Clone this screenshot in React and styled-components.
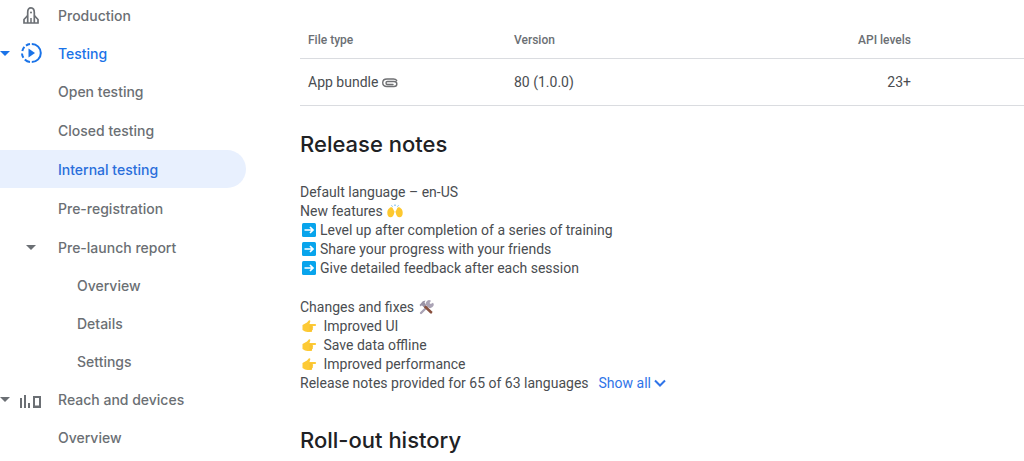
import React from 'react';
import styled, { createGlobalStyle } from 'styled-components';

const GlobalStyle = createGlobalStyle`
  * {
    box-sizing: border-box;
  }
  body {
    margin: 0;
    background: #fff;
    color: #4a4d51;
    font-family: Roboto, 'Liberation Sans', sans-serif;
    font-size: 14px;
    overflow-x: hidden;
  }
`;

const Page = styled.div`
  display: flex;
  gap: 54px;
`;

const Sidebar = styled.nav`
  flex: 0 0 246px;
  margin-top: -4px;
`;

const NavList = styled.ul`
  display: flex;
  flex-direction: column;
  gap: ${props => props.$gap || 0}px;
  margin: 0;
  padding: 0;
  list-style: none;
`;

const NavLink = styled.a`
  display: flex;
  align-items: center;
  height: 38px;
  padding-left: ${props => (props.$indent ? 77 : 0)}px;
  border-radius: 0 19px 19px 0;
  background: ${props => (props.$selected ? '#e8f0fe' : 'transparent')};
  color: ${props => (props.$selected ? '#2a6edb' : props.$active ? '#1a73e8' : '#6b6f74')};
  font-family: Inter, 'Open Sans', sans-serif;
  font-size: 14px;
  font-weight: 500;
  text-decoration: none;
`;

const Gutter = styled.span`
  display: flex;
  align-items: center;
  flex: 0 0 58px;
  padding-left: ${props => (props.$nested ? 26 : 0)}px;
`;

const CaretSlot = styled.span`
  display: flex;
  flex: 0 0 20px;
`;

const Main = styled.main`
  flex: 1;
  min-width: 0;
  padding: 22px 0 0;
`;

const BundleTable = styled.table`
  width: 100%;
  table-layout: fixed;
  border-collapse: collapse;
  text-align: left;
`;

const HeadCell = styled.th`
  width: ${props => (props.$width ? `${props.$width}px` : 'auto')};
  height: 36px;
  padding: 0 8px;
  border-bottom: 1px solid #dadce0;
  color: #6b6f74;
  font-size: 12px;
  font-weight: 500;
  text-align: ${props => (props.$right ? 'right' : 'left')};
`;

const Cell = styled.td`
  height: 47px;
  padding: 0 8px;
  border-bottom: 1px solid #dadce0;
  text-align: ${props => (props.$right ? 'right' : 'left')};
`;

const Title = styled.h2`
  margin: 0;
  color: #202124;
  font-family: Inter, 'Open Sans', sans-serif;
  font-size: 22px;
  font-weight: 500;
  line-height: 28px;
`;

const Section = styled.section`
  padding-top: 24px;
`;

const Notes = styled.div`
  display: flex;
  flex-direction: column;
  gap: 20px;
  padding: 25px 0 9px;
  line-height: 19px;
`;

const Paragraph = styled.p`
  margin: 0;
`;

const Line = styled.span`
  display: flex;
  align-items: center;
`;

const Emoji = styled.svg`
  flex: none;
  width: 16px;
  height: 16px;
  margin: 0 2px;
`;

const InlineEmoji = styled(Emoji)`
  margin-left: 4px;
`;

const ShowAll = styled.button`
  display: inline-flex;
  align-items: center;
  gap: 3px;
  margin-left: 10px;
  padding: 0;
  border: 0;
  background: none;
  color: #2f74e8;
  font: inherit;
  cursor: pointer;
`;

const Caret = () => (
  <svg width="10" height="5" viewBox="0 0 10 5" aria-hidden="true">
    <path d="M0 0h10L5 5z" fill="currentColor" />
  </svg>
);

const RocketIcon = () => (
  <svg width="22" height="22" viewBox="0 0 22 22" fill="none" stroke="currentColor" strokeWidth="1.7" aria-hidden="true">
    <path d="M7.700 19V8.500c0-2.800.8-4.700 3.300-4.700s3.300 1.900 3.300 4.700V19" />
    <path d="M7.700 11.500L4 15.500V19h14v-3.500l-3.700-4" />
    <path d="M11 14v5" strokeWidth="1.500" />
    <circle cx="11" cy="8.500" r="1" fill="currentColor" stroke="none" />
  </svg>
);

const TestingIcon = () => (
  <svg width="22" height="22" viewBox="0 0 22 22" aria-hidden="true">
    <path d="M11.800 2a9 9 0 0 1 0 18" fill="none" stroke="currentColor" strokeWidth="2" />
    <path
      d="M10 2a9 9 0 0 0-4 1.600M4.400 4.900A9 9 0 0 0 2.300 9M2 11.500a9 9 0 0 0 1.400 4.300M4.800 17.500A9 9 0 0 0 10 20"
      fill="none"
      stroke="currentColor"
      strokeWidth="2"
    />
    <path d="M8.500 6.500v9l6.500-4.500z" fill="currentColor" />
  </svg>
);

const DevicesIcon = () => (
  <svg width="22" height="22" viewBox="0 0 22 22" aria-hidden="true">
    <path d="M0 10h2v10H0zM4 7h2v13H4zM8 15h2v5H8z" fill="currentColor" />
    <path d="M13 8h8v12h-8zM15 10v7.500h4V10z" fill="currentColor" fillRule="evenodd" />
  </svg>
);

const ChevronDown = () => (
  <svg width="12" height="8" viewBox="0 0 12 8" aria-hidden="true">
    <path d="M1 1.500l5 5 5-5" fill="none" stroke="currentColor" strokeWidth="2" />
  </svg>
);

const Paperclip = () => (
  <InlineEmoji viewBox="0 0 16 16" role="img" aria-label="Paperclip">
    <path
      d="M11 10.500H5.500c-2 0-2-3 0-3h6.500c3.800 0 3.800 5 0 5H5c-5.700 0-5.700-7.500 0-7.500h6.500c1.500 0 2.500.5 3.200 1.500"
      fill="none"
      stroke="#6f7073"
      strokeWidth="1.400"
      strokeLinecap="round"
    />
  </InlineEmoji>
);

const RaisedHands = () => (
  <InlineEmoji viewBox="0 0 16 16" role="img" aria-label="Raised hands">
    <path d="M2.300 5.300c.8-1.500 3-1.500 3.600.2l.9 2c.8.400.9 1.500.3 2.800-.4 2.200-1.300 4-3.600 4-2.200 0-3.300-2-3.200-4.500 0-2.200.8-3.500 2-4.500z" fill="#fdc82f" />
    <path d="M13.700 5.300c-.8-1.500-3-1.500-3.600.2l-.9 2c-.8.400-.9 1.500-.3 2.800.4 2.200 1.300 4 3.600 4 2.200 0 3.300-2 3.200-4.500 0-2.200-.8-3.500-2-4.500z" fill="#fdc82f" />
    <path d="M4.600 2.500l.8 1M8 1.500V3M11.400 2.500l-.8 1" stroke="#4ba3e3" />
  </InlineEmoji>
);

const ArrowBox = () => (
  <Emoji viewBox="0 0 16 16" role="img" aria-label="Right arrow">
    <rect x="0" y="1" width="14" height="14" rx="1.500" fill="#08a4ec" />
    <path d="M2.500 8h8.500M8 5l3 3-3 3" fill="none" stroke="#fff" strokeWidth="1.700" />
  </Emoji>
);

const Tools = () => (
  <InlineEmoji viewBox="0 0 16 16" role="img" aria-label="Hammer and wrench">
    <path d="M3 14l7-7" stroke="#aaa3b5" strokeWidth="2.300" strokeLinecap="round" />
    <path d="M9.500 7.500a3.300 3.300 0 0 1 3.500-5.800l-1.500 2.200 1.200 1.200 2.300-1.400a3.300 3.300 0 0 1-5.500 3.800z" fill="#aaa3b5" />
    <path d="M7 7.500l6 5.800" stroke="#88503e" strokeWidth="2.600" strokeLinecap="round" />
    <path d="M1.500 6l3.300-3.800 2.700-.7-1 2 1.600 2.500-2.300 2.300-2-2-1 1.100z" fill="#9a93a6" />
  </InlineEmoji>
);

const PointRight = () => (
  <Emoji viewBox="0 0 16 16" role="img" aria-label="Pointing right">
    <path
      d="M.5 7L5 4.500l2-2.200c1.300-.3 1.700.7 1 2L7.500 6H13c1.500 0 1.500 2 0 2h-2.700c1.200.3 1.200 1.900.1 2.100 1 .5.8 1.900-.4 2.100.5 1-.1 1.900-1.200 1.900H5.500L3 13.500.5 12z"
      fill="#fdca35"
    />
    <path d="M7.500 8h2.800M7.500 10h2.900M7.500 12.100H10" stroke="#eeb22b" strokeWidth=".6" />
  </Emoji>
);

function NavItem({ label, icon, caret, nested, indent, active, selected, children }) {
  return (
    <li>
      <NavLink href="#" $indent={indent} $active={active} $selected={selected} aria-current={selected ? 'page' : undefined}>
        {!indent && (
          <Gutter $nested={nested}>
            {nested ? caret && <Caret /> : <CaretSlot>{caret && <Caret />}</CaretSlot>}
            {icon}
          </Gutter>
        )}
        {label}
      </NavLink>
      {children}
    </li>
  );
}

export default function App() {
  return (
    <>
      <GlobalStyle />
      <Page>
        <Sidebar aria-label="Release">
          <NavList>
            <NavItem label="Production" icon={<RocketIcon />} />
            <NavItem label="Testing" icon={<TestingIcon />} caret active>
              <NavList $gap={1}>
                <NavItem label="Open testing" nested />
                <NavItem label="Closed testing" nested />
                <NavItem label="Internal testing" nested selected />
                <NavItem label="Pre-registration" nested />
                <NavItem label="Pre-launch report" nested caret>
                  <NavList>
                    <NavItem label="Overview" indent />
                    <NavItem label="Details" indent />
                    <NavItem label="Settings" indent />
                  </NavList>
                </NavItem>
              </NavList>
            </NavItem>
            <NavItem label="Reach and devices" icon={<DevicesIcon />} caret>
              <NavList>
                <NavItem label="Overview" nested />
              </NavList>
            </NavItem>
          </NavList>
        </Sidebar>
        <Main>
          <BundleTable>
            <thead>
              <tr>
                <HeadCell $width={206}>File type</HeadCell>
                <HeadCell>Version</HeadCell>
                <HeadCell $right>API levels</HeadCell>
                <HeadCell as="td" $width={105} />
              </tr>
            </thead>
            <tbody>
              <tr>
                <Cell><Line>App bundle<Paperclip /></Line></Cell>
                <Cell>80 (1.0.0)</Cell>
                <Cell $right>23+</Cell>
                <Cell />
              </tr>
            </tbody>
          </BundleTable>
          <Section>
            <Title>Release notes</Title>
            <Notes>
              <Paragraph>
                <Line>Default language – en-US</Line>
                <Line>New features <RaisedHands /></Line>
                <Line><ArrowBox />Level up after completion of a series of training</Line>
                <Line><ArrowBox />Share your progress with your friends</Line>
                <Line><ArrowBox />Give detailed feedback after each session</Line>
              </Paragraph>
              <Paragraph>
                <Line>Changes and fixes <Tools /></Line>
                <Line><PointRight />&nbsp;Improved UI</Line>
                <Line><PointRight />&nbsp;Save data offline</Line>
                <Line><PointRight />&nbsp;Improved performance</Line>
                <Line>
                  Release notes provided for 65 of 63 languages
                  <ShowAll type="button">Show all<ChevronDown /></ShowAll>
                </Line>
              </Paragraph>
            </Notes>
          </Section>
          <Section>
            <Title>Roll-out history</Title>
          </Section>
        </Main>
      </Page>
    </>
  );
}
